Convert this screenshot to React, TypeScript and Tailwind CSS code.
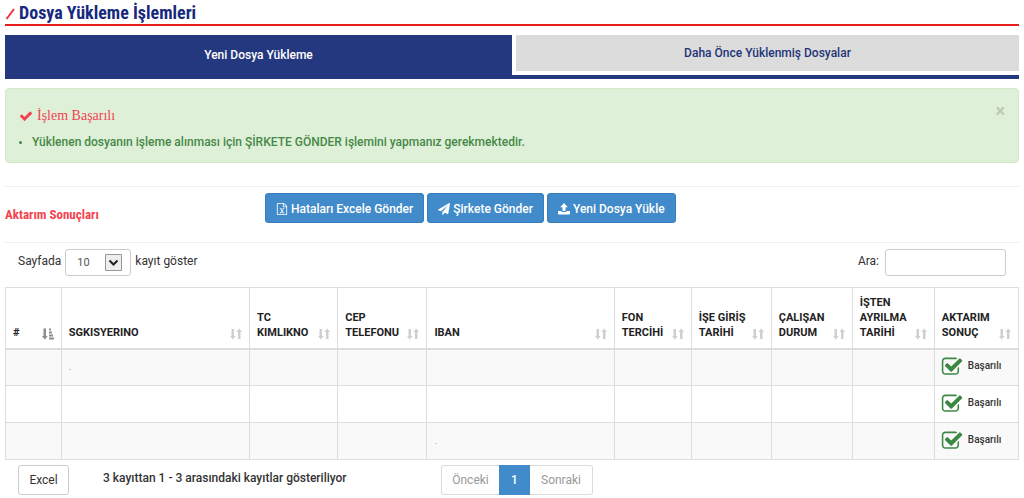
import React from "react";

const HEADERS: { label: string; width: string }[] = [
  { label: "#", width: "w-[5.5%]" },
  { label: "SGKISYERINO", width: "w-[18.6%]" },
  { label: "TC KIMLIKNO", width: "w-[8.7%]" },
  { label: "CEP TELEFONU", width: "w-[8.8%]" },
  { label: "IBAN", width: "w-[18.5%]" },
  { label: "FON TERCİHİ", width: "w-[7.6%]" },
  { label: "İŞE GİRİŞ TARİHİ", width: "w-[7.9%]" },
  { label: "ÇALIŞAN DURUM", width: "w-[8%]" },
  { label: "İŞTEN AYRILMA TARİHİ", width: "w-[8.1%]" },
  { label: "AKTARIM SONUÇ", width: "w-[8.3%]" },
];

const ROWS: string[][] = [
  ["", ".", "", "", "", "", "", "", ""],
  ["", "", "", "", "", "", "", "", ""],
  ["", "", "", "", ".", "", "", "", ""],
];

function Glyph({ d, className }: { d: string; className: string }) {
  return (
    <svg viewBox="0 0 1792 1792" className={className} fill="currentColor" aria-hidden="true">
      <path d={d} />
    </svg>
  );
}

const CHECK =
  "M1671 566q0 40-28 68l-724 724-136 136q-28 28-68 28t-68-28l-136-136-362-362q-28-28-28-68t28-68l136-136q28-28 68-28t68 28l294 295 656-657q28-28 68-28t68 28l136 136q28 28 28 68z";
const CHECK_SQUARE =
  "M1472 930v318q0 119-84.5 203.5t-203.5 84.5h-832q-119 0-203.5-84.5t-84.5-203.5v-832q0-119 84.5-203.5t203.5-84.5h832q63 0 117 25 15 7 18 23 3 17-9 29l-49 49q-10 10-23 10-3 0-9-2-23-6-45-6h-832q-66 0-113 47t-47 113v832q0 66 47 113t113 47h832q66 0 113-47t47-113v-254q0-13 9-22l64-64q10-10 23-10 6 0 12 3 20 8 20 29zm231-489l-814 814q-24 24-57 24t-57-24l-430-430q-24-24-24-57t24-57l110-110q24-24 57-24t57 24l263 263 647-647q24-24 57-24t57 24l110 110q24 24 24 57t-24 57z";
const EXCEL =
  "M1596 380q28 28 48 76t20 88v1152q0 40-28 68t-68 28h-1344q-40 0-68-28t-28-68v-1600q0-40 28-68t68-28h896q40 0 88 20t76 48zm-444-244v376h376q-10-29-22-41l-313-313q-12-12-41-22zm384 1528v-1024h-416q-40 0-68-28t-28-68v-416h-768v1536h1280zm-979-234v106h281v-106h-75l103-161q5-7 10-16.5t7.5-13.5 3.5-4h2q1 4 5 10 2 4 4.5 7.5t6 8 6.5 8.5l107 161h-76v106h291v-106h-68l-192-273 195-282h67v-107h-279v107h74l-103 159q-4 7-10 16.5t-9 13.5l-2 3h-2q-1-4-5-10-6-11-17-23l-106-159h76v-107h-290v107h68l189 272-194 283h-68z";
const PLANE =
  "M1764 11q33 24 27 64l-256 1536q-5 29-32 45-14 8-31 8-11 0-24-5l-453-185-242 295q-18 23-49 23-13 0-22-4-19-7-30.5-23.5t-11.5-36.5v-349l864-1059-1069 925-395-162q-37-14-40-55-2-40 32-59l1664-960q15-9 32-9 20 0 36 11z";

function UploadIcon() {
  return (
    <svg viewBox="0 0 12 12" className="size-3" fill="currentColor" aria-hidden="true">
      <path d="M6 0l3.8 4.2H7.5V8h-3V4.2H2.2zM.4 8h3.2v1h4.8V8h3.2l.4.5V11l-.4.5H.4L0 11V8.5z" />
    </svg>
  );
}

function SortIcon() {
  return (
    <svg viewBox="0 0 12 12" className="size-3 shrink-0 text-[#cfcfcf]" fill="currentColor" aria-hidden="true">
      <path d="M1.5 1H4v7h1.7l-2.9 3.5L0 8h1.5zM8 11h2.5V4H12L9.2.5 6.4 4H8z" />
    </svg>
  );
}

function SortedIcon() {
  return (
    <svg viewBox="0 0 12 12" className="size-3 shrink-0 text-[#8c8c8c]" fill="currentColor" aria-hidden="true">
      <path d="M1.5.5H4V8h1.7l-2.9 3.5L0 8h1.5zM7 .5h2v2H7zM7 3.5h3v2H7zM7 6.5h4v2H7zM7 9.5h5v2H7z" />
    </svg>
  );
}

function ActionButton({ icon, children }: { icon: React.ReactNode; children: React.ReactNode }) {
  return (
    <button
      type="button"
      className="flex h-[30px] items-center gap-[3px] whitespace-nowrap rounded-[3px] border border-[#357ebd] bg-[#428bca] px-2.5 pt-px text-xs font-medium text-white"
    >
      {icon}
      {children}
    </button>
  );
}

export default function App() {
  return (
    <main className="bg-white px-[5px] font-['Roboto','Liberation_Sans',sans-serif] text-xs text-[#333]">
      <header className="flex h-[26px] items-center gap-1 border-b-2 border-[#e8201c]">
        <svg viewBox="0 0 10 12" className="mt-1 h-3 w-2.5" aria-hidden="true">
          <path d="M1.5 11L9 1" stroke="#ee3342" strokeWidth="2" />
        </svg>
        <h1 className="mt-0.5 font-['Roboto_Condensed','Roboto',sans-serif] text-lg font-bold leading-6 text-[#16297c]">
          Dosya Yükleme İşlemleri
        </h1>
      </header>

      <nav className="mt-[9px] flex h-11 gap-1 border-b-4 border-[#243880] text-xs font-medium">
        <a href="#yeni" className="flex w-1/2 items-center justify-center bg-[#243880] text-white">
          Yeni Dosya Yükleme
        </a>
        <a href="#onceki" className="mb-1 flex flex-1 items-center justify-center bg-[#dcdcdc] text-[#1f3479]">
          Daha Önce Yüklenmiş Dosyalar
        </a>
      </nav>

      <section className="mt-[9px] flex h-[75px] items-start justify-between rounded border border-[#d6e9c6] bg-[#dff0d8] pl-[13px] pr-[13px] pt-[17px]">
        <div>
          <h2 className="flex items-center gap-1 font-['Liberation_Serif',serif] text-sm leading-5 text-[#f2444f]">
            <Glyph d={CHECK} className="size-3.5" />
            İşlem Başarılı
          </h2>
          <ul className="mt-2 list-disc pl-[13px] text-xs font-medium leading-4 text-[#468847] marker:text-[10px]">
            <li>Yüklenen dosyanın işleme alınması için ŞİRKETE GÖNDER işlemini yapmanız gerekmektedir.</li>
          </ul>
        </div>
        <button type="button" aria-label="Kapat" className="text-lg font-bold leading-[10px] text-[#bccab7]">
          ×
        </button>
      </section>

      <section className="mt-[23px] flex h-[57px] items-start border-y border-[#eee] pt-1.5">
        <h2 className="mt-3.5 w-[260px] font-['Roboto_Condensed','Roboto',sans-serif] text-[13px] font-bold leading-4 text-[#f2444f]">
          Aktarım Sonuçları
        </h2>
        <div className="flex gap-[3px]">
          <ActionButton icon={<Glyph d={EXCEL} className="size-3" />}>Hataları Excele Gönder</ActionButton>
          <ActionButton icon={<Glyph d={PLANE} className="size-3" />}>Şirkete Gönder</ActionButton>
          <ActionButton icon={<UploadIcon />}>Yeni Dosya Yükle</ActionButton>
        </div>
      </section>

      <div className="flex items-start justify-between px-[13px] pb-[11px] pt-1.5">
        <label className="flex gap-1 leading-6">
          Sayfada
          <span className="relative">
            <select
              defaultValue="10"
              className="h-[27px] w-[66px] appearance-none rounded-[3px] border border-[#ccc] bg-white px-[11px] text-[11px] text-[#555]"
            >
              <option>10</option>
              <option>25</option>
              <option>50</option>
            </select>
            <svg viewBox="0 0 17 17" className="pointer-events-none absolute right-[9px] top-[5px] size-[17px]" aria-hidden="true">
              <path d="M.5.5h16v16H.5z" fill="#eee" stroke="#999" />
              <path d="M4.5 6.5l4 4 4-4" fill="none" stroke="#222" strokeWidth="2" />
            </svg>
          </span>
          kayıt göster
        </label>
        <label className="flex gap-1.5 leading-6">
          Ara:
          <input type="search" className="h-[27px] w-[121px] rounded-[3px] border border-[#ccc] bg-white px-2" />
        </label>
      </div>

      <table className="w-full table-fixed border-collapse border border-[#ddd]">
        <thead>
          <tr className="h-[61px] border-b-2 border-[#ddd]">
            {HEADERS.map((h, i) => (
              <th key={h.label} className={`${h.width} border-x border-[#ddd] px-[7px] pb-2 pt-1.5 text-left align-bottom text-[11px] font-bold leading-[15px] text-[#222]`}>
                <div className="flex items-end justify-between">
                  <span>{h.label}</span>
                  {i === 0 ? <SortedIcon /> : <SortIcon />}
                </div>
              </th>
            ))}
          </tr>
        </thead>
        <tbody>
          {ROWS.map((row, r) => (
            <tr key={r} className="h-[37px] odd:bg-[#f9f9f9]">
              {row.map((cell, c) => (
                <td key={c} className="border border-[#ddd] px-[7px] py-0 text-[10px] leading-4 text-[#aaa]">
                  {cell}
                </td>
              ))}
              <td className="border border-[#ddd] px-1.5 py-0">
                <div className="flex items-center gap-[5px] text-[10px] font-medium leading-4">
                  <Glyph d={CHECK_SQUARE} className="size-[22px] shrink-0 text-[#3c8744]" />
                  <span className="pb-0.5">Başarılı</span>
                </div>
              </td>
            </tr>
          ))}
        </tbody>
      </table>

      <footer className="flex items-start pl-[13px] pt-[5px]">
        <button type="button" className="h-[30px] w-[51px] rounded-[3px] border border-[#ccc] bg-white text-xs">
          Excel
        </button>
        <p className="ml-[34px] w-[338px] font-medium leading-[26px]">3 kayıttan 1 - 3 arasındaki kayıtlar gösteriliyor</p>
        <nav className="flex h-[30px] text-xs text-[#999]">
          <a href="#prev" className="flex w-[58px] items-center justify-center rounded-l-[3px] border border-r-0 border-[#ddd]">
            Önceki
          </a>
          <a href="#1" className="flex w-[31px] items-center justify-center bg-[#428bca] font-medium text-white">
            1
          </a>
          <a href="#next" className="flex w-[63px] items-center justify-center rounded-r-[3px] border border-l-0 border-[#ddd]">
            Sonraki
          </a>
        </nav>
      </footer>
    </main>
  );
}
